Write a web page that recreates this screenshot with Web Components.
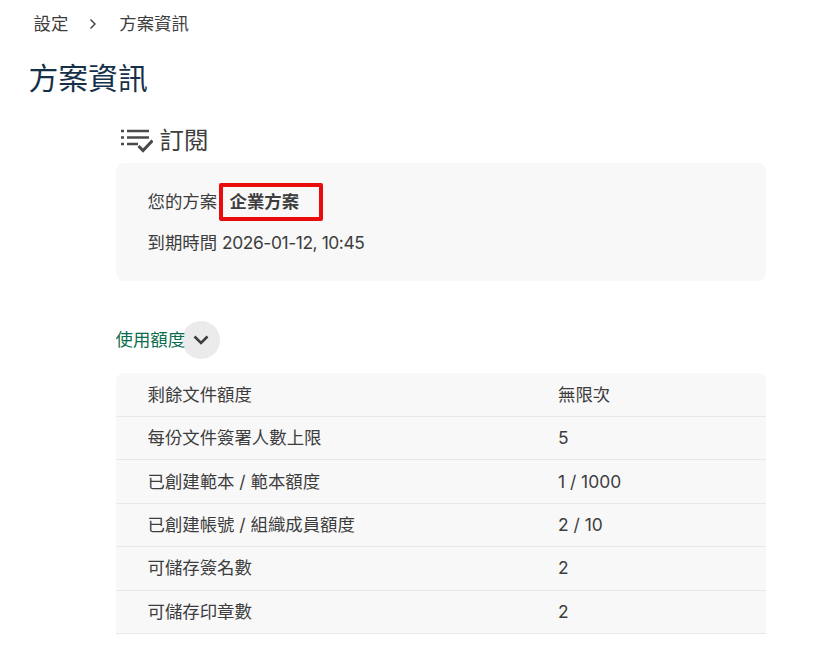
<!DOCTYPE html>
<html lang="zh-Hant"><head><meta charset="utf-8">
<style>
html,body{margin:0;padding:0;background:#fff}
body{width:832px;height:648px;overflow:hidden;font:17.4px/1.5 Inter,"Noto Sans CJK TC",sans-serif;color:#3d3d3d}
</style></head><body>
<template id="t-bc"><style>
:host{display:flex;align-items:center;height:24px;padding:12px 0 0 33.500px;font-size:17.4px;line-height:24px;color:#3d3d3d}
svg{margin:0 21px 0 20px;display:block}
</style><span>設定</span><svg width="10" height="12" viewBox="0 0 10 12"><path d="M2.500 1.500 7 6l-4.500 4.500" fill="none" stroke="#3d3d3d" stroke-width="1.400"/></svg><span>方案資訊</span></template>
<template id="t-title"><style>
:host{display:block;padding:20px 0 0 28.500px;font-size:29.800px;line-height:44px;font-weight:400;color:#16304a}
</style><slot></slot></template>
<template id="t-section"><style>
:host{display:block;margin-left:116px;width:650px}
.h{display:flex;align-items:center;height:45px;margin-top:18px;font-size:24.400px;gap:6.500px;color:#3d3d3d}
svg{display:block;margin-left:5px}
</style><div class="h"><svg width="32" height="24" viewBox="0 0 32 24"><path d="M0 2h3M0 8.500h3M0 15h3M6 2h22M6 8.500h22M6 15h11" stroke="#4a4a4a" stroke-width="2.400" fill="none"/><path d="M17.500 17l4.500 4.500 9.500-10" stroke="#4a4a4a" stroke-width="3" fill="none"/></svg><span>訂閱</span></div><slot></slot></template>
<template id="t-card"><style>
:host{display:block;box-sizing:border-box;height:118px;background:#f8f8f9;border-radius:8px;padding:20px 31.500px 0}
.l{display:flex;align-items:center;height:38px}
.m{margin-top:3px;height:38px;display:flex;align-items:center;gap:5px}
.d{letter-spacing:-.42px}
.box{box-sizing:border-box;width:104.500px;height:38px;margin-left:1.500px;border:4px solid #e80c0c;border-radius:2px;padding-left:7px;font-weight:700;line-height:30px;color:#3d3d3d}
</style><div class="l"><span>您的方案</span><span class="box">企業方案</span></div><div class="m"><span>到期時間</span><span class="d">2026-01-12, 10:45</span></div></template>
<template id="t-toggle"><style>
:host{display:flex;align-items:center;height:38px;margin-top:40px;margin-left:-.5px;color:#0a6b4d;font-size:17.4px}
.c{width:38px;height:38px;border-radius:50%;background:#ebebeb;display:flex;align-items:center;justify-content:center;margin-left:-3px;flex:none}
span{position:relative;z-index:1}
</style><span>使用額度</span><div class="c"><svg width="16" height="10" viewBox="0 0 16 10"><path d="M1.500 1.500 8 8l6.500-6.500" fill="none" stroke="#3d3d3d" stroke-width="2.600"/></svg></div></template>
<template id="t-table"><style>
:host{display:block;margin-top:14px;padding-top:.6px;background:#f8f8f9;border-radius:8px 8px 0 0}
</style><slot></slot></template>
<template id="t-row"><style>
:host{display:grid;grid-template-columns:410.500px 1fr;box-sizing:border-box;height:43.400px;align-items:center;padding-left:31.500px;border-bottom:1.400px solid #e8e8e8}
</style><slot name="k"></slot><slot name="v"></slot></template>
<x-crumbs></x-crumbs>
<x-title>方案資訊</x-title>
<x-section>
<x-card></x-card>
<x-toggle></x-toggle>
<x-table>
<x-row><span slot="k">剩餘文件額度</span><span slot="v">無限次</span></x-row>
<x-row><span slot="k">每份文件簽署人數上限</span><span slot="v">5</span></x-row>
<x-row><span slot="k">已創建範本 / 範本額度</span><span slot="v">1 / 1000</span></x-row>
<x-row><span slot="k">已創建帳號 / 組織成員額度</span><span slot="v">2 / 10</span></x-row>
<x-row><span slot="k">可儲存簽名數</span><span slot="v">2</span></x-row>
<x-row><span slot="k">可儲存印章數</span><span slot="v">2</span></x-row>
</x-table>
</x-section>
<script>
const reg=(n,t)=>customElements.define(n,class extends HTMLElement{constructor(){super();this.attachShadow({mode:"open"}).append(document.getElementById(t).content.cloneNode(true))}});
reg("x-crumbs","t-bc");reg("x-title","t-title");reg("x-section","t-section");reg("x-card","t-card");reg("x-toggle","t-toggle");reg("x-table","t-table");reg("x-row","t-row");
</script>
</body></html>
